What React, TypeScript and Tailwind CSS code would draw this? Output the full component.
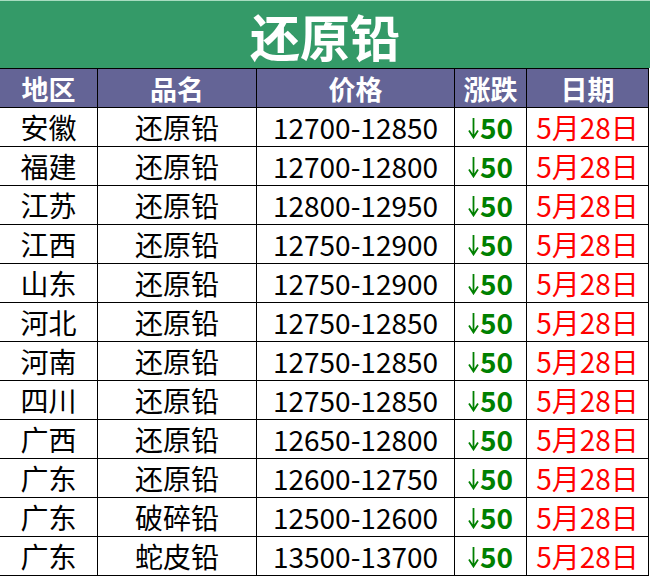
import React from 'react';

const rows: [string, string, string][] = [
  ['安徽', '还原铅', '12700-12850'],
  ['福建', '还原铅', '12700-12800'],
  ['江苏', '还原铅', '12800-12950'],
  ['江西', '还原铅', '12750-12900'],
  ['山东', '还原铅', '12750-12900'],
  ['河北', '还原铅', '12750-12850'],
  ['河南', '还原铅', '12750-12850'],
  ['四川', '还原铅', '12750-12850'],
  ['广西', '还原铅', '12650-12800'],
  ['广东', '还原铅', '12600-12750'],
  ['广东', '破碎铅', '12500-12600'],
  ['广东', '蛇皮铅', '13500-13700'],
];

const headers = ['地区', '品名', '价格', '涨跌', '日期'];

const cell = 'h-[39px] flex items-center justify-center border-r border-b border-black leading-none';

// thin down arrow, drawn taller than the digits like the sheet's glyph
const DownArrow = () => (
  <svg width="11" height="22" viewBox="0 0 11 22" className="mr-[1px] translate-y-[1px]" aria-label="↓">
    <path d="M5.5 1 V20.5 M1 13.5 L5.5 20.5 L10 13.5" fill="none" stroke="currentColor" strokeWidth="1.8" />
  </svg>
);

export default function App() {
  return (
    <div
      className="w-[650px] bg-white"
      style={{ fontFamily: '"Noto Sans CJK SC", "Noto Sans", sans-serif' }}
    >
      <div className="h-[68px] bg-[#349a68] border-t border-[#a8dcc0] flex items-center justify-center text-white font-bold text-[50px] leading-none">
        还原铅
      </div>
      <div className="grid grid-cols-[98px_159px_198px_72px_122px] w-[649px] border-t border-black">
        {headers.map((h) => (
          <div key={h} className={`${cell} bg-[#646496] text-white font-bold text-[27px]`}>
            {h}
          </div>
        ))}
        {rows.map(([region, name, price], i) => (
          <React.Fragment key={i}>
            <div className={`${cell} text-[28px] text-black`}>{region}</div>
            <div className={`${cell} text-[28px] text-black`}>{name}</div>
            <div className={`${cell} text-[28px] text-black`}>{price}</div>
            <div className={`${cell} text-[28px] text-[#008000]`}>
              <DownArrow />
              <span className="font-bold">50</span>
            </div>
            <div className={`${cell} text-[28px] text-[#ff0000]`}>5月28日</div>
          </React.Fragment>
        ))}
      </div>
    </div>
  );
}
